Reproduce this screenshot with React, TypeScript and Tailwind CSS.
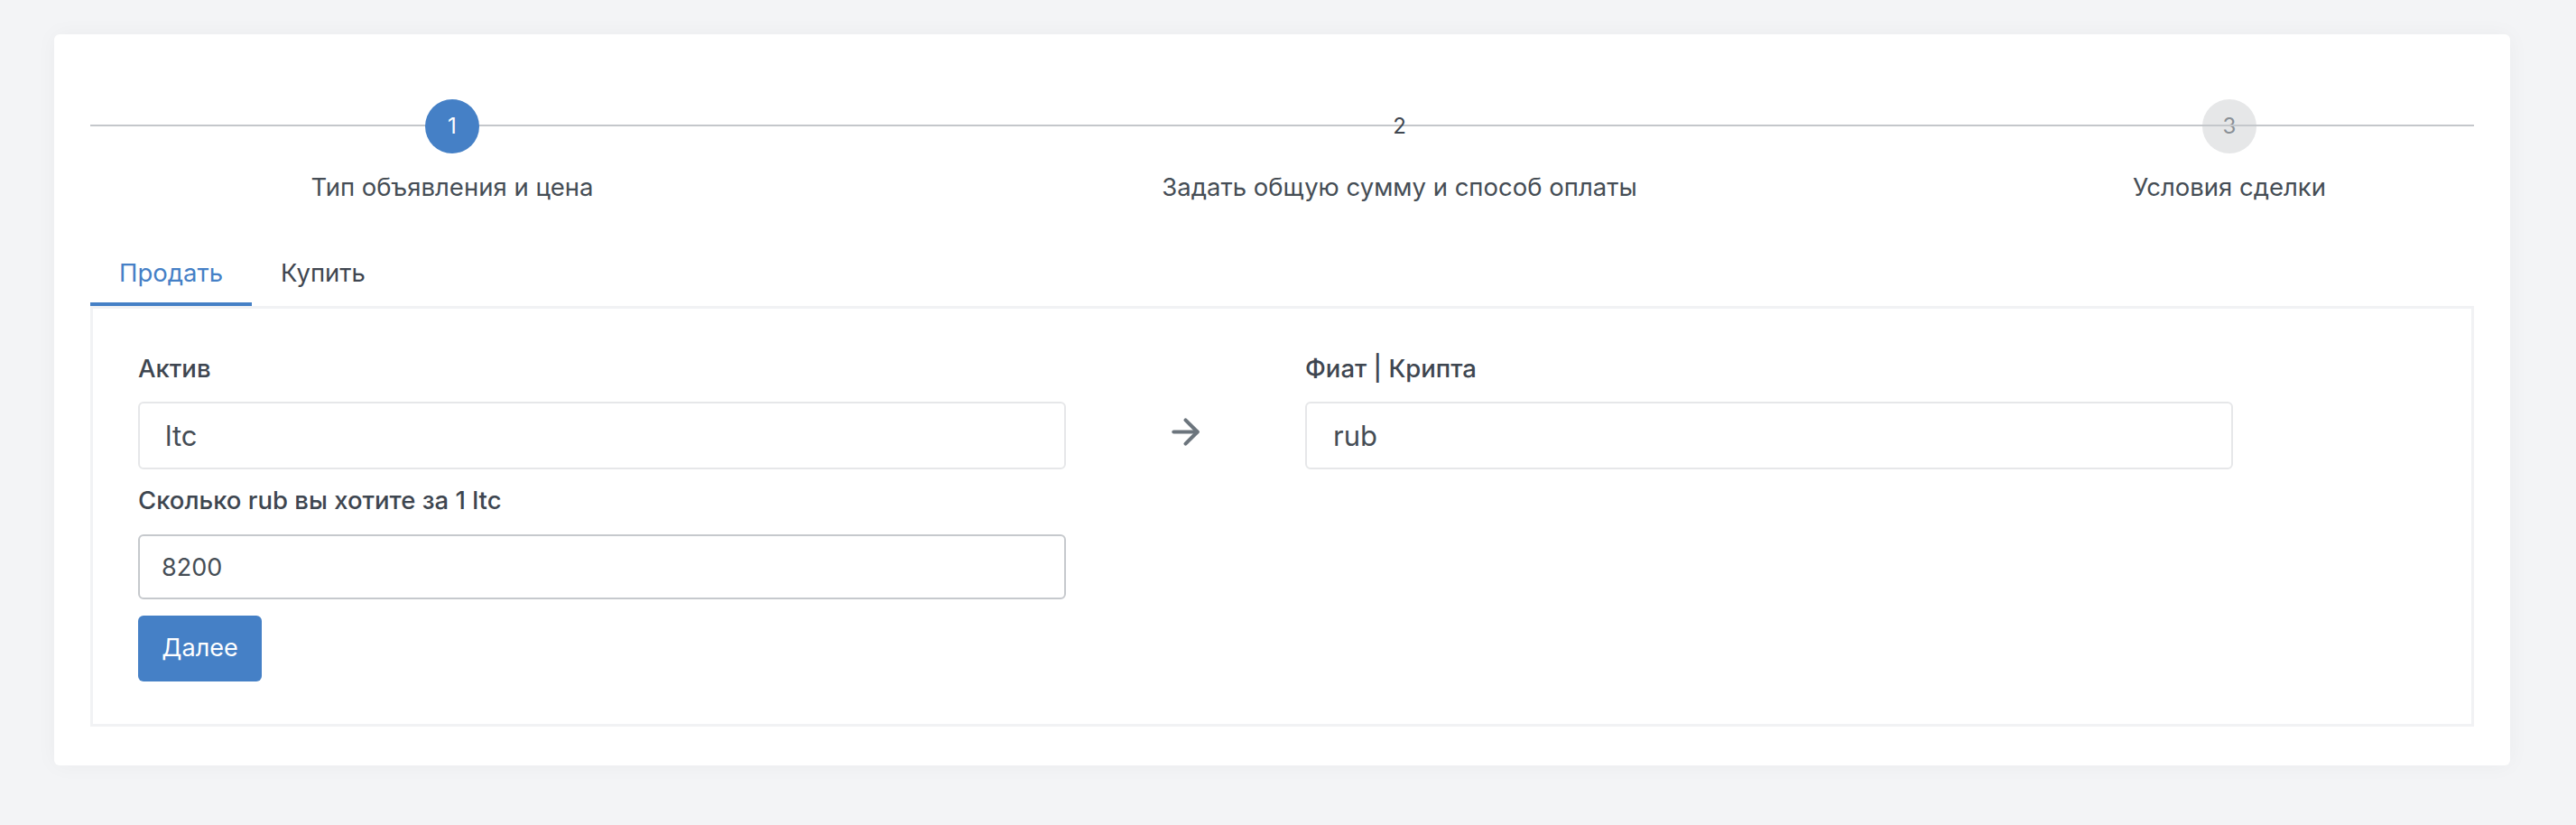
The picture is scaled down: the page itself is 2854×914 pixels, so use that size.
import React from "react";
import { ArrowRight } from "lucide-react";

const steps = [
  { n: "1", label: "Тип объявления и цена", state: "active" },
  { n: "2", label: "Задать общую сумму и способ оплаты", state: "current" },
  { n: "3", label: "Условия сделки", state: "todo" },
];

function Stepper() {
  return (
    <div className="relative grid grid-cols-[802px_1fr_542px]">
      {/* connector line */}
      <div className="absolute left-0 right-0 top-[28px] h-[2px] bg-[#c4c7cb]" />
      {steps.map((s) => (
        <div key={s.n} className="flex flex-col items-center">
          {s.state === "active" && (
            <div className="relative z-10 flex h-[60px] w-[60px] items-center justify-center rounded-full bg-[#4580c6] text-[24px] text-white">
              {s.n}
            </div>
          )}
          {s.state === "current" && (
            <div className="relative z-10 flex h-[60px] w-[60px] items-center justify-center text-[24px] text-[#3f4750]">
              {s.n}
            </div>
          )}
          {s.state === "todo" && (
            <div className="flex h-[60px] w-[60px] items-center justify-center rounded-full bg-[#e6e7e8] text-[24px] text-[#8a9096]">
              {s.n}
            </div>
          )}
          <div className="mt-[18px] text-[27.5px] leading-[39px] text-[#454d55]">{s.label}</div>
        </div>
      ))}
    </div>
  );
}

export default function App() {
  return (
    <div className="min-h-screen bg-[#f3f4f6] pl-[60px] pr-[73px] pt-[38px] font-['Inter',sans-serif]">
      <div className="rounded-md bg-white px-[40px] pb-[43px] pt-[72px] shadow-[0_0_24px_rgba(0,0,0,0.04)]">
        <Stepper />

        {/* Tabs */}
        <div className="mt-[38px] flex">
          <div className="border-b-4 border-[#4580c6] px-[32px] pb-[12px] pt-[16px] text-[27.5px] leading-[42px] text-[#4580c6]">
            Продать
          </div>
          <div className="border-b-4 border-transparent px-[32px] pb-[12px] pt-[16px] text-[27.5px] leading-[42px] text-[#3f4650]">
            Купить
          </div>
        </div>

        {/* Tab content */}
        <div className="border-[3px] border-[#f1f2f4] pb-[47px] pl-[50px] pt-[47px]">
          <div className="grid grid-cols-[1028px_265px_1028px]">
            <div className="flex flex-col">
              <label className="mb-[17px] text-[27.5px] font-medium leading-[39px] text-[#3e4650]">Актив</label>
              <input
                readOnly
                value="ltc"
                className="h-[75px] rounded-md border-2 border-[#e6e7e9] pl-[28px] text-[31px] text-[#454d55] outline-none"
              />
              <label className="mb-[18px] mt-[15px] text-[27.5px] font-medium leading-[39px] text-[#3e4650]">
                Сколько rub вы хотите за 1 ltc
              </label>
              <input
                readOnly
                value="8200"
                className="h-[72px] rounded-md border-2 border-[#c6c9cd] pl-[24px] text-[27px] text-[#454d55] outline-none"
              />
              <button className="mt-[18px] h-[73px] w-[137px] rounded-md bg-[#4580c6] text-[27px] text-white">
                Далее
              </button>
            </div>

            <div className="flex justify-center pt-[67px]">
              <ArrowRight size={45} strokeWidth={2.2} className="text-[#6c757d]" />
            </div>

            <div className="flex flex-col">
              <label className="mb-[17px] text-[27.5px] font-medium leading-[39px] text-[#3e4650]">Фиат | Крипта</label>
              <input
                readOnly
                value="rub"
                className="h-[75px] rounded-md border-2 border-[#e6e7e9] pl-[29px] text-[31px] text-[#454d55] outline-none"
              />
            </div>
          </div>
        </div>
      </div>
    </div>
  );
}
